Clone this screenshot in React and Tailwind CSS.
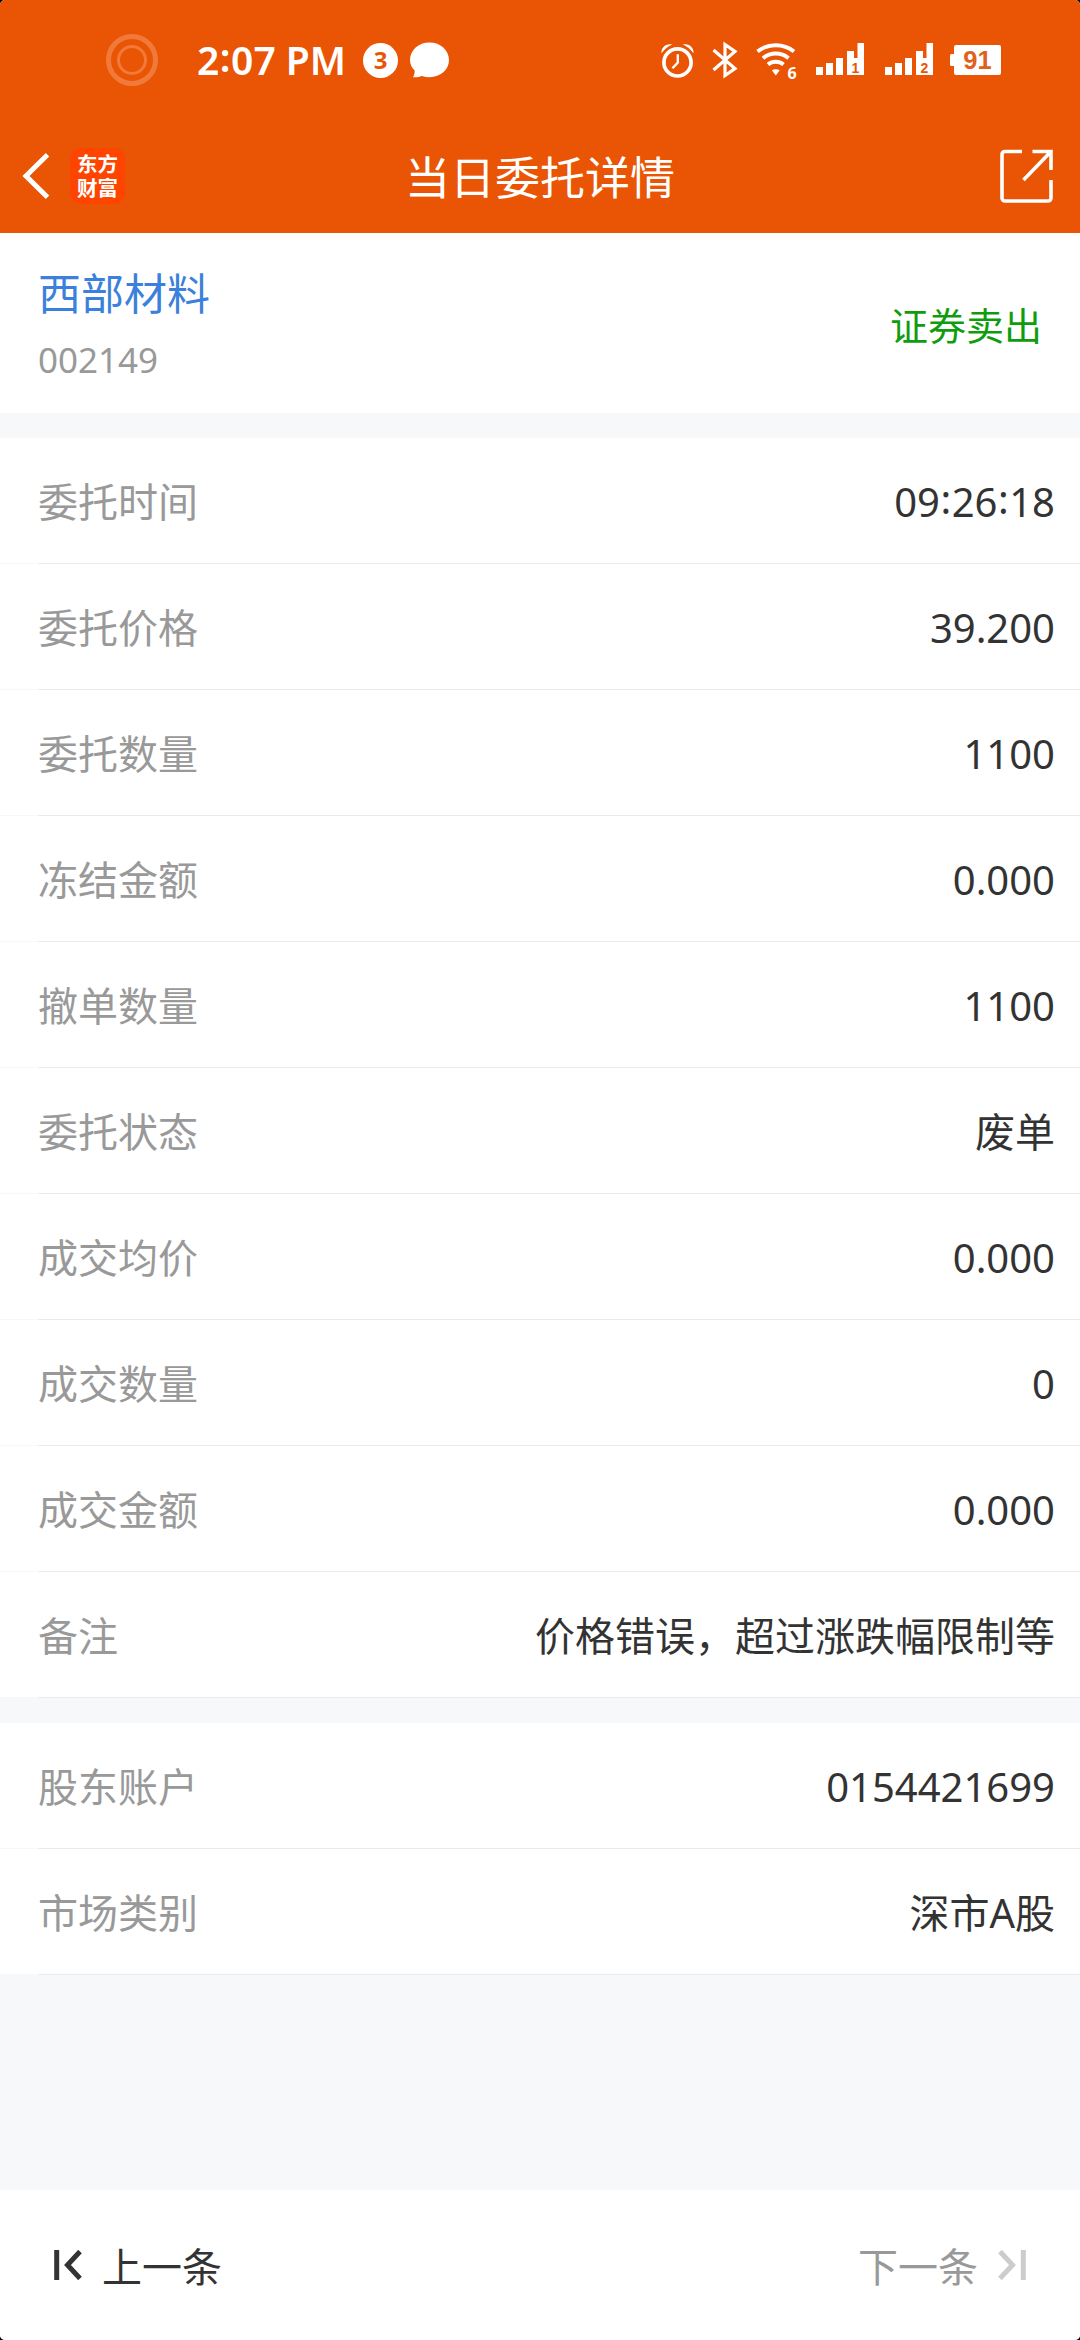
const orderRows = [
    { label: '委托时间', value: '09:26:18' },
    { label: '委托价格', value: '39.200' },
    { label: '委托数量', value: '1100' },
    { label: '冻结金额', value: '0.000' },
    { label: '撤单数量', value: '1100' },
    { label: '委托状态', value: '废单' },
    { label: '成交均价', value: '0.000' },
    { label: '成交数量', value: '0' },
    { label: '成交金额', value: '0.000' },
    { label: '备注', value: '价格错误，超过涨跌幅限制等' },
];

const accountRows = [
    { label: '股东账户', value: '0154421699' },
    { label: '市场类别', value: '深市A股' },
];

const CameraRing = () => (
    <svg className="w-[52px] h-[52px]" viewBox="0 0 52 52" fill="none" stroke="#f17a3a">
        <circle cx="26" cy="26" r="23.5" strokeWidth="5" />
        <circle cx="26" cy="26" r="13.5" strokeWidth="3" />
    </svg>
);

const ChatBubble = () => (
    <svg className="w-[39px] h-[36px]" viewBox="0 0 39 36" fill="white">
        <path d="M19.5 0.5C30.5 0.5 39 8.2 39 18c0 9.600-8.500 17.200-19.500 17.200-2.700 0-5.200-.4-7.500-1.200-2.800 1.100-6 1.400-9 1.200 1.200-2 1.800-4.200 1.700-6.700C1.700 25.500 0 22 0 18 0 8.200 8.500.5 19.500.5z" />
    </svg>
);

const AlarmIcon = () => (
    <svg className="w-[33px] h-[35px]" viewBox="0 0 34 36" fill="none" stroke="white">
        <circle cx="17" cy="20" r="14" strokeWidth="3.800" />
        <path d="M17.300 11.500v8.500l-5.500 6" strokeWidth="2.400" />
        <path d="M.5 10.500C0 5 5 0 11.500 1.600 7.500 3.400 3.500 6.600.5 10.500z" fill="white" stroke="none" />
        <path d="M33.500 10.500C34 5 29 0 22.500 1.600 26.500 3.400 30.500 6.600 33.500 10.500z" fill="white" stroke="none" />
    </svg>
);

const BluetoothIcon = () => (
    <svg className="w-[26px] h-[38px]" viewBox="0 0 26 38" fill="none" stroke="white" strokeWidth="3.200">
        <path d="M1.500 9L23 27.500 13 34.500V3.500l10 7L1.500 29" />
    </svg>
);

const WifiIcon = () => (
    <svg className="w-[42px] h-[34px] overflow-visible" viewBox="0 0 42 34" fill="none" stroke="white" strokeWidth="4">
        <path d="M1.500 8.500C12 .3 27.500.3 38 8.500" />
        <path d="M7 15.200C14.500 9 25 9 32.500 15.200" />
        <path d="M12 21.500C16.500 17.800 23 17.800 27.500 21.500" />
        <path d="M15.800 27.300C18 25.800 21.500 25.800 23.700 27.300L19.800 32.500z" fill="white" stroke="none" />
        <text x="31.500" y="35.500" fontSize="16" fontWeight="700" fill="white" stroke="none" fontFamily="Noto Sans, sans-serif">6</text>
    </svg>
);

const SignalIcon = ({ sim }) => (
    <svg className="w-[48px] h-[32px] overflow-visible" viewBox="0 0 48 32" fill="white">
        <rect x="0" y="24" width="7" height="8" />
        <rect x="10" y="20" width="7" height="12" />
        <rect x="20" y="15" width="7" height="17" />
        <path d="M31 8h7v7h3.500V0H48v32H31z" />
        <text x="39.500" y="29.500" textAnchor="middle" fontSize="14" fontWeight="700" fill="#e95504" fontFamily="Liberation Sans, sans-serif">{sim}</text>
    </svg>
);

const BatteryIcon = () => (
    <svg className="w-[51px] h-[30px] overflow-visible" viewBox="0 0 51 30" fill="white">
        <rect x="4" y="0" width="47" height="30" rx="2" />
        <rect x="0" y="9" width="6" height="12" rx="1.500" />
        <text x="27.500" y="24.300" textAnchor="middle" fontSize="25.500" fontWeight="700" fill="#e0601c" fontFamily="Liberation Sans, sans-serif">91</text>
    </svg>
);

// Colons sit at mid-height of the digits
const Clock = ({ time }) => (
    <>
        {time.split(':').map((part, i) => (
            <span key={i}>
                {i > 0 && <span className="inline-block -translate-y-[3px] mx-[0.5px]">:</span>}
                {part}
            </span>
        ))}
    </>
);

const StatusBar = () => (
    <div className="flex items-center h-[120px] pl-[106px] pr-[79px]">
        <CameraRing />
        <span className="ml-[39px] w-[150px] pb-[2px] text-[39px] leading-none font-semibold whitespace-nowrap">
            <Clock time="2:07 PM" />
        </span>
        <span className="ml-[16px] flex items-center justify-center w-[35px] h-[35px] rounded-full bg-white text-[#e95504] text-[24px] leading-none font-bold">
            3
        </span>
        <span className="ml-[12px]"><ChatBubble /></span>
        <div className="ml-auto flex items-center">
            <AlarmIcon />
            <span className="ml-[18px]"><BluetoothIcon /></span>
            <span className="ml-[18px]"><WifiIcon /></span>
            <span className="ml-[18px] pb-[2px]"><SignalIcon sim="1" /></span>
            <span className="ml-[21px] pb-[2px]"><SignalIcon sim="2" /></span>
            <span className="ml-[17px]"><BatteryIcon /></span>
        </div>
    </div>
);

const TitleBar = () => (
    <div className="grid grid-cols-[1fr_auto_1fr] items-center h-[113px] pb-[1px] px-[22px]">
        <div className="flex items-center">
            <svg className="w-[28px] h-[46px]" viewBox="0 0 28 46" fill="none" stroke="white" strokeWidth="5">
                <path d="M25.500 1.800L4 23l21.500 21.200" />
            </svg>
            <div className="ml-[20px] flex flex-col items-center justify-center w-[55px] h-[56px] pb-[1px] rounded-[11px] bg-[#ff4400] text-[20.500px] leading-[24px] font-bold">
                <span>东方</span>
                <span>财富</span>
            </div>
        </div>
        <h1 className="pt-[3px] text-[45px] leading-none">当日委托详情</h1>
        <svg className="w-[56px] h-[56px] mr-[3px] justify-self-end" viewBox="0 0 56 56" fill="none" stroke="white" strokeWidth="3.600">
            <path d="M23 3.500H6a3 3 0 0 0-3 3V50a3 3 0 0 0 3 3h43a3 3 0 0 0 3-3V32" />
            <path d="M33.500 3.500H52V22M51.500 4L24.500 32" />
        </svg>
    </div>
);

const DetailRow = ({ label, value }) => (
    <div className="flex h-[126px]">
        <div className="w-[38px] mb-px bg-white" />
        <div className="flex-1 flex items-center justify-between pt-[3px] pr-[25px] bg-white border-b border-[#ebebeb] text-[40px] leading-none">
            <span className="text-[#999999]">{label}</span>
            <span className="text-[#333333]"><Clock time={value} /></span>
        </div>
    </div>
);

const Footer = () => (
    <footer className="flex items-center justify-between h-[150px] pl-[54px] pr-[54px] bg-white text-[40px] leading-none">
        <button className="flex items-center gap-[20px] text-[#333333]">
            <svg className="w-[28px] h-[30px]" viewBox="0 0 28 30" fill="none" stroke="currentColor" strokeWidth="5">
                <path d="M2.700 0v30M26 1.500L13.500 15 26 28.500" />
            </svg>
            <span className="pt-[4px]">上一条</span>
        </button>
        <button className="flex items-center gap-[20px] text-[#999999]">
            <span className="pt-[4px]">下一条</span>
            <svg className="w-[28px] h-[30px] text-[#cccccc]" viewBox="0 0 28 30" fill="none" stroke="currentColor" strokeWidth="5">
                <path d="M25.300 0v30M2 1.500L14.500 15 2 28.500" />
            </svg>
        </button>
    </footer>
);

const App = () => {
    return (
        <div className="bg-black">
            <div className="flex flex-col w-[1080px] h-[2340px] overflow-hidden rounded-[5px] bg-[#f7f8fa] font-['Noto_Sans','Noto_Sans_CJK_SC',sans-serif]">
                <header className="bg-[#e95504] text-white">
                    <StatusBar />
                    <TitleBar />
                </header>

                {/* Stock summary */}
                <section className="flex items-center justify-between h-[180px] pt-[3px] pl-[38px] pr-[38px] bg-white">
                    <div className="flex flex-col gap-[27px]">
                        <span className="text-[43px] leading-none text-[#3b80db]">西部材料</span>
                        <span className="text-[35px] leading-none text-[#999999]">002149</span>
                    </div>
                    <span className="text-[38px] leading-none text-[#0f9d0f]">证券卖出</span>
                </section>

                <section className="mt-[25px]">
                    {orderRows.map((row) => (
                        <DetailRow key={row.label} label={row.label} value={row.value} />
                    ))}
                </section>

                <section className="mt-[25px]">
                    {accountRows.map((row) => (
                        <DetailRow key={row.label} label={row.label} value={row.value} />
                    ))}
                </section>

                <div className="mt-auto">
                    <Footer />
                </div>
            </div>
        </div>
    );
};

export default App;
